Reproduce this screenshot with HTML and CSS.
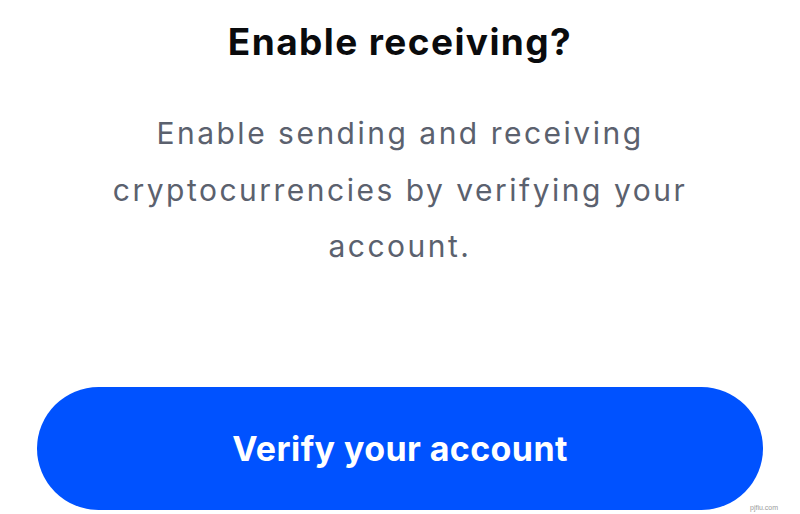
FILE: index.html
```html
<!DOCTYPE html>
<html>
<head>
<meta charset="utf-8">
<link rel="stylesheet" href="styles.css">
</head>
<body>
<main class="sheet">
  <h1 class="title">Enable receiving?</h1>
  <p class="desc">Enable sending and receiving cryptocurrencies by verifying your account.</p>
  <div class="spacer"></div>
  <button class="cta">Verify your account</button>
  <span class="mark">pjfiu.com</span>
</main>
</body>
</html>
```
FILE: styles.css
```css
html, body {
  margin: 0;
  padding: 0;
  background: #ffffff;
}
.sheet {
  position: relative;
  width: 800px;
  height: 514px;
  display: flex;
  flex-direction: column;
  align-items: center;
  font-family: Inter, "Noto Sans", sans-serif;
  box-sizing: border-box;
  padding: 18px 37px 4px;
}
.title {
  margin: 0;
  font-size: 37px;
  font-weight: 700;
  line-height: 48px;
  color: #0a0b0d;
  letter-spacing: 1.4px;
}
.desc {
  margin: 39px 0 0;
  width: 640px;
  text-align: center;
  font-size: 30px;
  line-height: 56.5px;
  color: #5b616e;
  font-weight: 400;
  letter-spacing: 2.5px;
}
.spacer {
  flex: 1;
}
.cta {
  width: 726px;
  height: 123px;
  border: none;
  border-radius: 62px;
  background: #0052ff;
  color: #ffffff;
  font-family: Inter, "Noto Sans", sans-serif;
  font-size: 34px;
  font-weight: 700;
  letter-spacing: 0.4px;
}
.mark {
  position: absolute;
  right: 22px;
  bottom: 3px;
  font-size: 7px;
  color: #9a9a9a;
  font-family: "Liberation Sans", sans-serif;
}
```
